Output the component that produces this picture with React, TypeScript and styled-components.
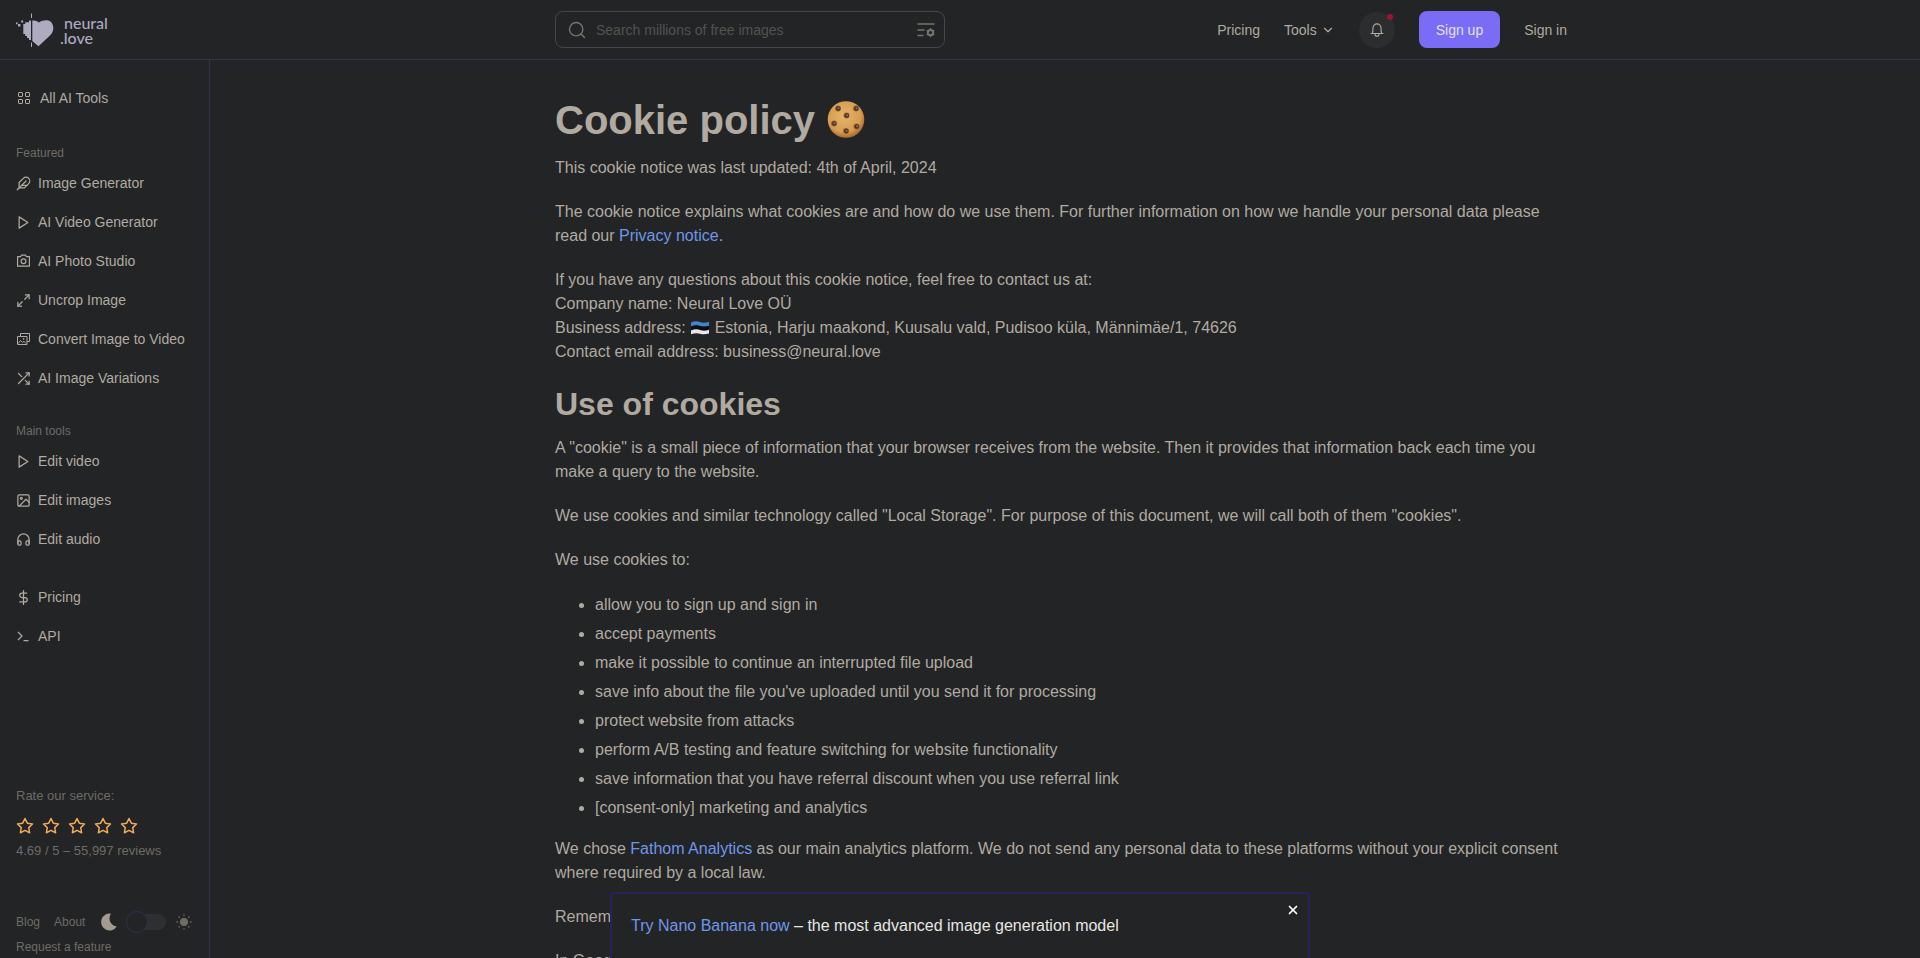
import React from "react";
import styled, { createGlobalStyle } from "styled-components";
import { X } from "lucide-react";
import {
  FiChevronDown,
  FiDollarSign,
  FiFeather,
  FiHeadphones,
  FiImage,
  FiMaximize2,
  FiPlay,
  FiSearch,
  FiShuffle,
  FiStar,
} from "react-icons/fi";

const c = {
  bg: "#222426",
  text: "#b1aaa0",
  muted: "#6f6b65",
  line: "#32334a",
  link: "#6f97e8",
};

const Global = createGlobalStyle`
  *, *::before, *::after { box-sizing: border-box; }
  body {
    margin: 0;
    background: ${c.bg};
    color: ${c.text};
    font-family: "Liberation Sans", Arial, sans-serif;
    font-size: 16px;
    line-height: 24px;
  }
  a { color: inherit; text-decoration: none; }
  button, input { font: inherit; color: inherit; }
  svg { display: block; flex: none; }
`;

const Shell = styled.div`
  display: flex;
  flex-direction: column;
  height: 100vh;
`;

const Header = styled.header`
  display: grid;
  grid-template-columns: 210px minmax(0, 1fr);
  flex: none;
  height: 60px;
  border-bottom: 1px solid ${c.line};
`;

const Logo = styled.a`
  display: flex;
  align-items: center;
  gap: 6px;
  padding-left: 16px;
  color: #aeaac0;
`;

const LogoText = styled.span`
  display: grid;
  font-family: Lato, "Liberation Sans", sans-serif;
  font-size: 16px;
  font-weight: 500;
  line-height: 15px;
`;

const LogoLine = styled.span<{ $indent?: boolean }>`
  padding-left: ${(p) => (p.$indent ? 4 : 0)}px;
`;

const HeaderInner = styled.div`
  display: flex;
  align-items: center;
  justify-content: space-between;
  width: 100%;
  max-width: 1020px;
  margin: 0 auto;
  padding-right: 8px;
  font-size: 14px;
`;

const SearchBox = styled.label`
  display: flex;
  align-items: center;
  width: 390px;
  height: 37px;
  padding: 0 9px 0 11px;
  gap: 9px;
  border: 1px solid #44474b;
  border-radius: 8px;
  color: #77736c;
`;

const SearchInput = styled.input`
  flex: 1;
  min-width: 0;
  padding: 0;
  border: 0;
  outline: 0;
  background: none;
  &::placeholder { color: #54524e; opacity: 1; }
`;

const IconButton = styled.button`
  display: flex;
  padding: 0;
  border: 0;
  background: none;
  cursor: pointer;
`;

const TopNav = styled.nav`
  display: flex;
  align-items: center;
  gap: 24px;
`;

const ToolsButton = styled(IconButton)`
  align-items: center;
  gap: 4px;
`;

const BellButton = styled(IconButton)`
  position: relative;
  align-items: center;
  justify-content: center;
  width: 36px;
  height: 36px;
  border-radius: 50%;
  background: #2b2d2f;
`;

const BellDot = styled.span`
  position: absolute;
  top: 2px;
  right: 2px;
  width: 6px;
  height: 6px;
  border-radius: 50%;
  background: #a01433;
`;

const SignUp = styled.button`
  height: 37px;
  padding: 0 17px;
  border: 0;
  border-radius: 8px;
  background: #7a6cf5;
  color: #e4e0ee;
  cursor: pointer;
`;

const Body = styled.div`
  display: flex;
  flex: 1;
  min-height: 0;
`;

const Sidebar = styled.aside`
  display: flex;
  flex-direction: column;
  flex: none;
  width: 210px;
  padding: 28px 16px 0;
  border-right: 1px solid ${c.line};
  font-size: 14px;
  line-height: 20px;
  overflow: hidden;
`;

const NavLink = styled.a`
  display: flex;
  align-items: center;
  gap: 7px;
  white-space: nowrap;
`;

const NavGroup = styled.section<{ $after: number }>`
  display: grid;
  gap: 19px;
  margin-bottom: ${(p) => p.$after}px;
`;

const NavTitle = styled.h2`
  margin: 0 0 -9px;
  color: ${c.muted};
  font-size: 12px;
  font-weight: 400;
  line-height: 20px;
`;

const Rating = styled.div`
  margin-top: auto;
  color: ${c.muted};
  font-size: 13px;
`;

const Stars = styled.div`
  display: flex;
  gap: 8px;
  padding: 11px 0 6px;
  color: #f0a95a;
`;

const SideFooter = styled.footer`
  padding: 46px 0 1px;
  color: ${c.muted};
  font-size: 12px;
`;

const FooterRow = styled.div`
  display: flex;
  align-items: center;
  height: 30px;
`;

const FooterLinks = styled.div`
  display: flex;
  gap: 14px;
  margin-right: 16px;
`;

const ThemeInput = styled.input`
  appearance: none;
  display: flex;
  align-items: center;
  width: 40px;
  height: 16px;
  margin: 0 10px 0 9px;
  border-radius: 8px;
  background: #2d2f30;
  cursor: pointer;
  &::before {
    content: "";
    width: 22px;
    height: 22px;
    border: 1px solid #2f3050;
    border-radius: 50%;
    background: ${c.bg};
  }
  &:checked::before { margin-left: auto; }
`;

const Main = styled.main`
  flex: 1;
  min-width: 0;
  padding: 36px 20px 0;
  overflow-y: auto;
  scrollbar-width: none;
`;

const Article = styled.article`
  max-width: 1020px;
  margin: 0 auto;
`;

const Title = styled.h1`
  display: flex;
  align-items: center;
  gap: 12px;
  margin: 0 0 12px;
  font-size: 40px;
  line-height: 48px;
`;

const Heading = styled.h2`
  margin: 0 0 12px;
  font-size: 32px;
  line-height: 40px;
`;

const Para = styled.p`
  margin: 0 0 20px;
`;

const Flag = styled.svg`
  display: inline-block;
  vertical-align: -2px;
`;

const Link = styled.a`
  color: ${c.link};
`;

const List = styled.ul`
  margin: 0 0 17px;
  padding: 1px 0 0 40px;
`;

const Item = styled.li`
  & + & { margin-top: 5px; }
`;

const Banner = styled.aside`
  position: fixed;
  bottom: 0;
  left: 50%;
  width: 700px;
  max-width: 100%;
  height: 66px;
  padding: 20px 19px;
  transform: translateX(-50%);
  border: 2px solid #25225c;
  border-bottom: 0;
  border-radius: 4px 4px 0 0;
  background: ${c.bg};
  color: #e8e6e3;
`;

const CloseButton = styled(IconButton)`
  position: absolute;
  top: 9px;
  right: 8px;
  color: #fff;
`;

const LogoMark = () => (
  <svg width="38" height="34" viewBox="0 0 38 34" fill="currentColor" aria-hidden="true">
    <path d="M16.300 7.600C18.500 7 21 7.800 23 9.600C25 7.800 28 7 31 7.200C35 7.600 37.300 11 37.300 15C37.300 18 36 20.500 34 22.500L22.500 33.200L16.300 28Z" />
    <path d="M13 7.500h2v19.500h-2v-2h-2v-2H9.200v-2H7.300V11h1.900V9.200H13z" />
    <path d="M15 .500h1V5h-1zM15 29.500h1V34h-1zM0 9.500h1.600v1.700H0zM2 11h2.400v2.600H2zM5.200 7.500h2v2h-2z" />
  </svg>
);

const GridIcon = () => (
  <svg width="17" height="14" viewBox="-1 0 17 14" fill="none" stroke="currentColor" aria-hidden="true">
    <rect x="1.5" y="1.5" width="4" height="4" rx=".5" />
    <rect x="8.5" y="1.5" width="4" height="4" rx=".5" />
    <rect x="1.5" y="8.500" width="4" height="4" rx=".5" />
    <rect x="8.500" y="8.500" width="4" height="4" rx=".5" />
  </svg>
);

const ImagesIcon = () => (
  <svg width="15" height="14" viewBox="0 0 15 14" fill="none" stroke="currentColor" aria-hidden="true">
    <path d="M4.500 4.500v-3h9v8h-2.500M1.500 4.500h9.500v8H1.500z" />
    <path d="M2 11.500l2.600-3 2 2 1.400-1.300 2 2.300" />
    <circle cx="7.600" cy="6.900" r=".5" />
  </svg>
);

const CameraIcon = () => (
  <svg width="15" height="14" viewBox="0 0 15 14" fill="none" stroke="currentColor" strokeWidth="1.2" aria-hidden="true">
    <path d="M1.600 2.600h3l.9-1.400h4l.9 1.400h3v9.600H1.600z" strokeLinejoin="round" />
    <circle cx="7.500" cy="7.300" r="2.400" />
  </svg>
);

const PromptIcon = () => (
  <svg width="15" height="14" viewBox="0 0 15 14" fill="none" stroke="currentColor" strokeWidth="1.2" aria-hidden="true">
    <path d="M2 3l4 4-4 4M7.500 11.600h5" />
  </svg>
);

const FilterIcon = () => (
  <svg width="18" height="16" viewBox="0 0 18 16" fill="none" stroke="currentColor" strokeWidth="1.5" strokeLinecap="round" aria-hidden="true">
    <path d="M1 2h16M1 8h6M1 13.500h5" />
    <circle cx="13.500" cy="10.600" r="2.700" strokeWidth="2" />
    <path d="M13.500 6.800v.6M13.500 13.800v.6M10.200 8.700l.6.3M16.200 12.200l.6.3M10.200 12.500l.6-.3M16.200 9l.6-.3" />
  </svg>
);

const BellIcon = () => (
  <svg width="14" height="16" viewBox="0 0 14 16" fill="none" stroke="currentColor" strokeWidth="1.1" strokeLinejoin="round" strokeLinecap="round" aria-hidden="true">
    <path d="M1 11.500h12M2.300 11.300C3 10 3 9 3 6.200a4 4.300 0 0 1 8 0c0 2.800 0 3.800.7 5.100" />
    <path d="M5 12.200a2 2 0 0 0 4 0" />
  </svg>
);

const MoonIcon = () => (
  <svg width="16" height="18" viewBox="0 0 16 18" fill="#a39b90" aria-hidden="true">
    <path d="M10 .6A8.500 8.500 0 1 0 15.800 13.600A8.300 8.300 0 0 1 10 .6Z" />
  </svg>
);

const SunIcon = () => (
  <svg width="16" height="16" viewBox="0 0 16 16" fill="currentColor" stroke="currentColor" strokeLinecap="round" strokeWidth="1.3" aria-hidden="true">
    <circle cx="8" cy="8" r="3.400" />
    <path d="M8 1v.6M8 14.400v.6M1 8h.6M14.400 8h.6M3 3l.4.4M12.600 12.600l.4.4M3 13l.4-.4M12.600 3.400l.4-.4" />
  </svg>
);

const CookieIcon = () => (
  <svg width="38" height="38" viewBox="0 0 38 38" role="img" aria-label="cookie">
    <defs>
      <radialGradient id="dough" cx=".45" cy=".4" r=".6">
        <stop offset="0" stopColor="#e6b56e" />
        <stop offset=".75" stopColor="#d69c52" />
        <stop offset="1" stopColor="#a96c2c" />
      </radialGradient>
    </defs>
    <circle cx="19" cy="18.500" r="18.300" fill="url(#dough)" />
    {[[11, 7.5], [29, 7.5], [19.5, 14.5], [7, 22.5], [29.5, 25.5], [19, 30]].map(([x, y]) => (
      <g key={`${x}-${y}`}>
        <circle cx={x} cy={y} r="3" fill="#9a6532" />
        <circle cx={x + 0.3} cy={y} r="2.200" fill="#4b2f27" />
        <circle cx={x + 0.6} cy={y - 0.2} r="1.100" fill="#8d6f62" />
      </g>
    ))}
  </svg>
);

const icon = { size: 15, "aria-hidden": true } as const;

const featured = [
  { label: "Image Generator", icon: <FiFeather {...icon} /> },
  { label: "AI Video Generator", icon: <FiPlay {...icon} /> },
  { label: "AI Photo Studio", icon: <CameraIcon /> },
  { label: "Uncrop Image", icon: <FiMaximize2 {...icon} /> },
  { label: "Convert Image to Video", icon: <ImagesIcon /> },
  { label: "AI Image Variations", icon: <FiShuffle {...icon} /> },
];

const tools = [
  { label: "Edit video", icon: <FiPlay {...icon} /> },
  { label: "Edit images", icon: <FiImage {...icon} /> },
  { label: "Edit audio", icon: <FiHeadphones {...icon} /> },
];

const more = [
  { label: "Pricing", icon: <FiDollarSign {...icon} /> },
  { label: "API", icon: <PromptIcon /> },
];

const purposes = [
  "allow you to sign up and sign in",
  "accept payments",
  "make it possible to continue an interrupted file upload",
  "save info about the file you've uploaded until you send it for processing",
  "protect website from attacks",
  "perform A/B testing and feature switching for website functionality",
  "save information that you have referral discount when you use referral link",
  "[consent-only] marketing and analytics",
];

type GroupProps = { title?: string; items: typeof featured; after: number };

const Group = ({ title, items, after }: GroupProps) => (
  <NavGroup $after={after}>
    {title && <NavTitle>{title}</NavTitle>}
    {items.map((item) => (
      <NavLink key={item.label} href="#">
        {item.icon}
        {item.label}
      </NavLink>
    ))}
  </NavGroup>
);

export default function App() {
  return (
    <Shell>
      <Global />
      <Header>
        <Logo href="#">
          <LogoMark />
          <LogoText>
            <LogoLine $indent>neural</LogoLine>
            <LogoLine>.love</LogoLine>
          </LogoText>
        </Logo>
        <HeaderInner>
          <SearchBox>
            <FiSearch size={20} strokeWidth={1.7} aria-hidden />
            <SearchInput type="search" aria-label="Search" placeholder="Search millions of free images" />
            <IconButton type="button" aria-label="Search filters">
              <FilterIcon />
            </IconButton>
          </SearchBox>
          <TopNav>
            <a href="#">Pricing</a>
            <ToolsButton type="button">
              Tools
              <FiChevronDown size={14} aria-hidden />
            </ToolsButton>
            <BellButton type="button" aria-label="Notifications">
              <BellIcon />
              <BellDot />
            </BellButton>
            <SignUp type="button">Sign up</SignUp>
            <a href="#">Sign in</a>
          </TopNav>
        </HeaderInner>
      </Header>
      <Body>
        <Sidebar>
          <Group items={[{ label: "All AI Tools", icon: <GridIcon /> }]} after={35} />
          <Group title="Featured" items={featured} after={33} />
          <Group title="Main tools" items={tools} after={38} />
          <Group items={more} after={38} />
          <Rating>
            Rate our service:
            <Stars>
              {[1, 2, 3, 4, 5].map((n) => (
                <IconButton key={n} type="button" aria-label={`Rate ${n}`}>
                  <FiStar size={18} color="#f0a95a" />
                </IconButton>
              ))}
            </Stars>
            4.69 / 5 – 55,997 reviews
          </Rating>
          <SideFooter>
            <FooterRow>
              <FooterLinks>
                <a href="#">Blog</a>
                <a href="#">About</a>
              </FooterLinks>
              <MoonIcon />
              <ThemeInput type="checkbox" role="switch" aria-label="Light theme" />
              <SunIcon />
            </FooterRow>
            <a href="#">Request a feature</a>
          </SideFooter>
        </Sidebar>
        <Main>
          <Article>
            <Title>
              Cookie policy
              <CookieIcon />
            </Title>
            <Para>This cookie notice was last updated: 4th of April, 2024</Para>
            <Para>
              The cookie notice explains what cookies are and how do we use them. For further information on how we
              handle your personal data please read our <Link href="#">Privacy notice</Link>.
            </Para>
            <Para>
              If you have any questions about this cookie notice, feel free to contact us at:
              <br />
              Company name: Neural Love OÜ
              <br />
              Business address:{" "}
              <Flag width="20" height="14" viewBox="0 0 20 14" role="img" aria-label="Estonia">
                <path d="M1 1.500Q6 -.5 10 1T19 .8V5Q14 6 10 5T1 5.500Z" fill="#4384c9" />
                <path d="M1 5.500Q6 3.500 10 5T19 4.800V9Q14 10 10 9T1 9.500Z" fill="#0d0f12" />
                <path d="M1 9.500Q6 7.500 10 9T19 8.800V12.500Q14 14 10 12.800T1 13.300Z" fill="#e6e8ea" />
              </Flag>{" "}
              Estonia, Harju maakond, Kuusalu vald, Pudisoo küla, Männimäe/1, 74626
              <br />
              Contact email address: business@neural.love
            </Para>
            <Heading>Use of cookies</Heading>
            <Para>
              A "cookie" is a small piece of information that your browser receives from the website. Then it provides
              that information back each time you make a query to the website.
            </Para>
            <Para>
              We use cookies and similar technology called "Local Storage". For purpose of this document, we will call
              both of them "cookies".
            </Para>
            <Para>We use cookies to:</Para>
            <List>
              {purposes.map((purpose) => (
                <Item key={purpose}>{purpose}</Item>
              ))}
            </List>
            <Para>
              We chose <Link href="#">Fathom Analytics</Link> as our main analytics platform. We do not send any
              personal data to these platforms without your explicit consent where required by a local law.
            </Para>
            <Para>Remember</Para>
            <Para>In Google</Para>
          </Article>
        </Main>
      </Body>
      <Banner>
        <Link href="#">Try Nano Banana now</Link> – the most advanced image generation model
        <CloseButton type="button" aria-label="Close">
          <X size={14} strokeWidth={3} />
        </CloseButton>
      </Banner>
    </Shell>
  );
}
